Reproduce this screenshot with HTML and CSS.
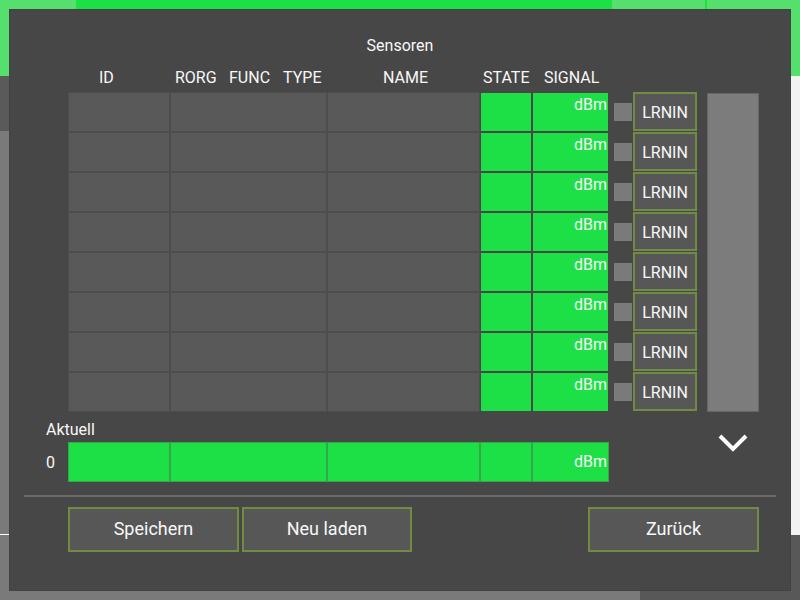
FILE: index.html
```html
<!DOCTYPE html>
<html lang="de">
<head>
<meta charset="utf-8">
<title>Sensoren</title>
<link rel="stylesheet" href="styles.css">
</head>
<body>
<div class="backdrop">
  <div class="bg bg-green-top"></div>
  <div class="bg bg-light-left"></div>
  <div class="bg bg-light-right"></div>
  <div class="bg bg-green-line"></div>
  <div class="bg bg-left-dark"></div>
  <div class="bg bg-left-gray"></div>
  <div class="bg bg-left-white"></div>
  <div class="bg bg-right-white"></div>
  <div class="bg bg-right-dark"></div>
  <div class="bg bg-bottom-gray"></div>
  <div class="bg bg-bottom-dark"></div>
</div>

<div class="dialog">
  <div class="title">Sensoren</div>
  <div class="head">
    <span class="h h-id">ID</span>
    <span class="h h-rorg">RORG</span>
    <span class="h h-func">FUNC</span>
    <span class="h h-type">TYPE</span>
    <span class="h h-name">NAME</span>
    <span class="h h-state">STATE</span>
    <span class="h h-signal">SIGNAL</span>
  </div>

  <div class="main">
    <div class="rows">
      <div class="row"><div class="cell c-id"></div><div class="cell c-rft"></div><div class="cell c-name"></div><div class="cell c-state"></div><div class="cell c-sig">dBm</div><div class="chk"></div><button class="lrn">LRNIN</button></div>
      <div class="row"><div class="cell c-id"></div><div class="cell c-rft"></div><div class="cell c-name"></div><div class="cell c-state"></div><div class="cell c-sig">dBm</div><div class="chk"></div><button class="lrn">LRNIN</button></div>
      <div class="row"><div class="cell c-id"></div><div class="cell c-rft"></div><div class="cell c-name"></div><div class="cell c-state"></div><div class="cell c-sig">dBm</div><div class="chk"></div><button class="lrn">LRNIN</button></div>
      <div class="row"><div class="cell c-id"></div><div class="cell c-rft"></div><div class="cell c-name"></div><div class="cell c-state"></div><div class="cell c-sig">dBm</div><div class="chk"></div><button class="lrn">LRNIN</button></div>
      <div class="row"><div class="cell c-id"></div><div class="cell c-rft"></div><div class="cell c-name"></div><div class="cell c-state"></div><div class="cell c-sig">dBm</div><div class="chk"></div><button class="lrn">LRNIN</button></div>
      <div class="row"><div class="cell c-id"></div><div class="cell c-rft"></div><div class="cell c-name"></div><div class="cell c-state"></div><div class="cell c-sig">dBm</div><div class="chk"></div><button class="lrn">LRNIN</button></div>
      <div class="row"><div class="cell c-id"></div><div class="cell c-rft"></div><div class="cell c-name"></div><div class="cell c-state"></div><div class="cell c-sig">dBm</div><div class="chk"></div><button class="lrn">LRNIN</button></div>
      <div class="row"><div class="cell c-id"></div><div class="cell c-rft"></div><div class="cell c-name"></div><div class="cell c-state"></div><div class="cell c-sig">dBm</div><div class="chk"></div><button class="lrn">LRNIN</button></div>
    </div>
    <div class="scroll"></div>
  </div>

  <div class="current">
    <div class="cur-left">
      <div class="aktuell">Aktuell</div>
      <div class="cur-row">
        <span class="idx">0</span>
        <div class="cur-cells">
          <div class="gcell c-id"></div><div class="gcell c-rft"></div><div class="gcell c-name"></div><div class="gcell c-state"></div><div class="gcell c-sig gsig">dBm</div>
        </div>
      </div>
    </div>
    <div class="chev">
      <svg width="52" height="22" viewBox="0 0 52 22"><polyline points="13,3 26,16 39,3" fill="none" stroke="#ffffff" stroke-width="4" stroke-linecap="butt" stroke-linejoin="miter"/></svg>
    </div>
  </div>

  <div class="sep"></div>

  <div class="actions">
    <div class="group">
      <button class="btn">Speichern</button>
      <button class="btn">Neu laden</button>
    </div>
    <button class="btn">Zurück</button>
  </div>
</div>
</body>
</html>
```

FILE: styles.css
```css
* { box-sizing: border-box; }
html, body { margin: 0; padding: 0; }
body {
  width: 800px;
  height: 600px;
  overflow: hidden;
  position: relative;
  background: #474747;
  font-family: Roboto, "Liberation Sans", sans-serif;
  color: #f8f8f8;
}

/* obscured application behind the modal */
.backdrop { position: absolute; inset: 0; }
.bg { position: absolute; }
.bg-green-top { left: 76px; top: 0; width: 536px; height: 76px; background: #1ce046; }
.bg-light-left { left: 0; top: 0; width: 76px; height: 76px; background: #55e06e; }
.bg-light-right { left: 612px; top: 0; width: 188px; height: 76px; background: #55e06e; }
.bg-green-line { left: 705px; top: 0; width: 2px; height: 76px; background: #1ce046; }
.bg-left-dark { left: 0; top: 76px; width: 20px; height: 55px; background: #5a5a5a; }
.bg-left-gray { left: 0; top: 131px; width: 20px; height: 469px; background: #7a7a7a; }
.bg-left-white { left: 0; top: 534px; width: 20px; height: 1px; background: #ffffff; }
.bg-right-white { left: 780px; top: 76px; width: 20px; height: 459px; background: #f2f2f2; }
.bg-right-dark { left: 780px; top: 535px; width: 20px; height: 65px; background: #585858; }
.bg-bottom-gray { left: 0; top: 580px; width: 640px; height: 20px; background: #7a7a7a; }
.bg-bottom-dark { left: 640px; top: 580px; width: 160px; height: 20px; background: #585858; }

/* modal dialog */
.dialog {
  position: absolute;
  left: 9px;
  top: 9px;
  width: 782px;
  height: 582px;
  background: #474747;
  border: 1px solid #424242;
  padding: 26px 14px 0 14px;
}

.title {
  text-align: center;
  font-size: 16px;
  line-height: 20px;
}

.head {
  margin-top: 12px;
  padding-left: 75px;
  display: grid;
  grid-template-columns: 76px 54px 54px 100px 100px 61px auto;
  font-size: 16px;
  line-height: 20px;
  white-space: nowrap;
}

.main {
  margin-top: 4px;
  padding-left: 44px;
  display: flex;
  align-items: flex-start;
}
.rows { display: flex; flex-direction: column; }
.row {
  display: flex;
  align-items: flex-start;
  height: 40px;
}
.cell {
  height: 40px;
  background: #595959;
  border: 1px solid #4d4d4d;
}
.c-id { width: 102px; }
.c-rft { width: 157px; }
.c-name { width: 153px; }
.c-state { width: 52px; }
.c-sig { width: 77px; }
.cell.c-state, .cell.c-sig {
  background: #1ce046;
  border-color: #474747;
}
.cell.c-sig {
  text-align: right;
  font-size: 16px;
  line-height: 20px;
  padding: 2px 1px 0 0;
}
.chk {
  width: 18px;
  height: 18px;
  margin-left: 5px;
  margin-top: 11px;
  background: #7a7a7a;
}
.lrn {
  margin-left: 1px;
  width: 64px;
  height: 39px;
  background: #575757;
  border: 2px solid #718c42;
  color: #f8f8f8;
  font-family: Roboto, "Liberation Sans", sans-serif;
  font-size: 16px;
  padding: 2px 0 0 0;
}
.scroll {
  margin-left: 10px;
  margin-top: 1px;
  width: 52px;
  height: 319px;
  background: #7c7c7c;
  border: 1px solid #666666;
}

.current {
  margin-top: 7px;
  display: flex;
  justify-content: space-between;
  padding-right: 17px;
}
.aktuell {
  padding-left: 22px;
  font-size: 16px;
  line-height: 20px;
  padding-top: 1px;
}
.cur-row {
  margin-top: 2px;
  display: flex;
  align-items: center;
  padding-left: 22px;
}
.idx {
  width: 22px;
  font-size: 16px;
  line-height: 20px;
  padding-top: 1px;
}
.cur-cells { display: flex; }
.gcell {
  height: 40px;
  background: #1ce046;
  border: 1px solid #34a848;
}
.gsig {
  text-align: right;
  font-size: 16px;
  line-height: 38px;
  padding-right: 1px;
}
.chev {
  margin-top: 14px;
  width: 52px;
  height: 22px;
}
.chev svg { display: block; }

.sep {
  margin-top: 13px;
  height: 2px;
  background: #6b6b6b;
}

.actions {
  margin-top: 10px;
  padding-left: 44px;
  padding-right: 17px;
  display: flex;
  justify-content: space-between;
}
.group { display: flex; gap: 3px; }
.btn {
  width: 171px;
  height: 45px;
  background: #575757;
  border: 2px solid #718c42;
  color: #f8f8f8;
  font-family: Roboto, "Liberation Sans", sans-serif;
  font-size: 18px;
  padding: 0 0 2px 0;
}
.group .btn + .btn { width: 170px; }
```
